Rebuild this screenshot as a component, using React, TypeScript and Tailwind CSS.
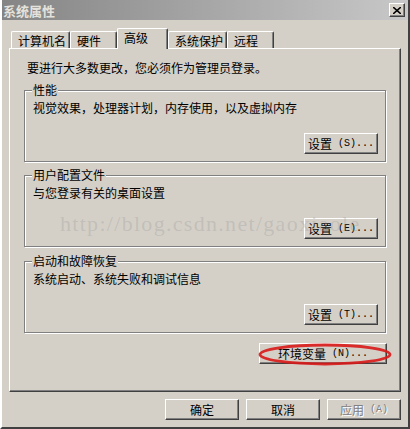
import React from "react";

const font = '"Noto Sans CJK SC", "Liberation Sans", sans-serif';

function Mono({ children }: { children: React.ReactNode }) {
  return (
    <span className="text-[10px] leading-[14px]" style={{ fontFamily: '"Liberation Mono", monospace' }}>
      {children}
    </span>
  );
}

function Btn({
  children,
  className = "",
  disabled = false,
}: {
  children: React.ReactNode;
  className?: string;
  disabled?: boolean;
}) {
  return (
    <div
      className={
        "h-[21px] w-[74px] flex items-center justify-center text-[12px] leading-[14px] border border-t-white border-l-white border-r-[#404040] border-b-[#404040] shadow-[inset_-1px_-1px_0_#808080] bg-[#d4d0c8] " +
        (disabled ? "text-[#808080] [text-shadow:1px_1px_0_#ffffff] " : "text-black ") +
        className
      }
    >
      {children}
    </div>
  );
}

function Group({
  title,
  desc,
  btn,
  hot,
}: {
  title: string;
  desc: string;
  btn: string;
  hot: string;
}) {
  return (
    <div className="relative h-[72px] border border-[#808080] shadow-[1px_1px_0_#ffffff,inset_1px_1px_0_#ffffff] flex flex-col">
      <span className="absolute left-[7px] top-[-8px] px-[1px] bg-[#d4d0c8] text-[12px] leading-[14px] text-black">
        {title}
      </span>
      <div className="pl-[8px] pt-[10px] text-[12px] leading-[14px] text-black">{desc}</div>
      <div className="mt-auto self-end mr-[7px] mb-[7px]">
        <Btn>
          {btn}
          <Mono>&nbsp;({hot})...</Mono>
        </Btn>
      </div>
    </div>
  );
}

function Tab({
  label,
  w,
  selected = false,
}: {
  label: string;
  w: string;
  selected?: boolean;
}) {
  return (
    <div
      className={
        "flex items-start pl-[6px] text-[12px] leading-[14px] text-black bg-[#d4d0c8] border-t border-l border-r border-t-white border-l-white border-r-[#404040] shadow-[inset_-1px_0_0_#808080] rounded-t-[2px] " +
        w +
        (selected ? " h-[21px] -mb-[1px] relative z-10 pt-[2px] pl-[6px]" : " h-[17px] pt-[2px]")
      }
    >
      {label}
    </div>
  );
}

export default function App() {
  return (
    <div
      className="relative w-[410px] h-[429px] bg-[#d4d0c8] flex flex-col overflow-hidden border-l-2 border-l-white border-r-2 border-r-[#404040] border-b-2 border-b-[#404040]"
      style={{ fontFamily: font }}
    >
      {/* title bar */}
      <div className="h-[20px] flex items-center justify-between bg-gradient-to-r from-[#858585] to-[#c8c8c8] pl-[1px] pr-[3px]">
        <span className="text-[13px] leading-[15px] font-bold text-[#e4e2dc]">系统属性</span>
        <div className="w-[16px] h-[14px] flex items-center justify-center bg-[#d4d0c8] border border-t-white border-l-white border-r-[#404040] border-b-[#404040] shadow-[inset_-1px_-1px_0_#808080]">
          <svg width="8" height="7" viewBox="0 0 8 7">
            <path d="M0 0 L8 7 M8 0 L0 7" stroke="#000" strokeWidth="1.6" />
          </svg>
        </div>
      </div>

      <div className="px-[7px] flex flex-col">
        {/* tabs */}
        <div className="mt-[8px] h-[20px] flex items-end pl-[2px]">
          <Tab label="计算机名" w="w-[59px]" />
          <Tab label="硬件" w="w-[47px]" />
          <Tab label="高级" w="w-[51px]" selected />
          <Tab label="系统保护" w="w-[59px]" />
          <Tab label="远程" w="w-[47px]" />
        </div>

        {/* panel */}
        <div className="h-[344px] border border-t-white border-l-white border-r-[#404040] border-b-[#404040] shadow-[inset_-1px_-1px_0_#808080] flex flex-col px-[14px]">
          <div className="pt-[12px] pl-[3px] text-[12px] leading-[14px] text-black">
            要进行大多数更改，您必须作为管理员登录。
          </div>
          <div className="mt-[15px]">
            <Group title="性能" desc="视觉效果，处理器计划，内存使用，以及虚拟内存" btn="设置" hot="S" />
          </div>
          <div className="mt-[13px]">
            <Group title="用户配置文件" desc="与您登录有关的桌面设置" btn="设置" hot="E" />
          </div>
          <div className="mt-[14px]">
            <Group title="启动和故障恢复" desc="系统启动、系统失败和调试信息" btn="设置" hot="T" />
          </div>
          <div className="mt-[10px] self-end -mr-[1px]">
            <Btn className="w-[128px]">
              环境变量<Mono>&nbsp;(N)...</Mono>
            </Btn>
          </div>
        </div>

        {/* bottom buttons */}
        <div className="mt-[7px] flex justify-end gap-[7px]">
          <Btn>确定</Btn>
          <Btn>取消</Btn>
          <Btn disabled>
            应用<Mono>&nbsp;(A)</Mono>
          </Btn>
        </div>
      </div>

      {/* watermark */}
      <div
        className="absolute left-[58px] top-[212px] text-[22px] leading-[24px] tracking-[1.3px] text-[rgba(150,150,150,0.3)] pointer-events-none whitespace-nowrap"
        style={{ fontFamily: '"Liberation Serif", serif' }}
      >
        http://blog.csdn.net/gaoxiaole
      </div>

      {/* red annotation ellipse */}
      <svg
        className="absolute left-[255px] top-[342px] pointer-events-none"
        width="136"
        height="25"
        viewBox="0 0 136 25"
      >
        <ellipse cx="68" cy="12.5" rx="65" ry="9.5" fill="none" stroke="#d81818" strokeWidth="2.8" opacity="0.9" />
      </svg>
    </div>
  );
}
